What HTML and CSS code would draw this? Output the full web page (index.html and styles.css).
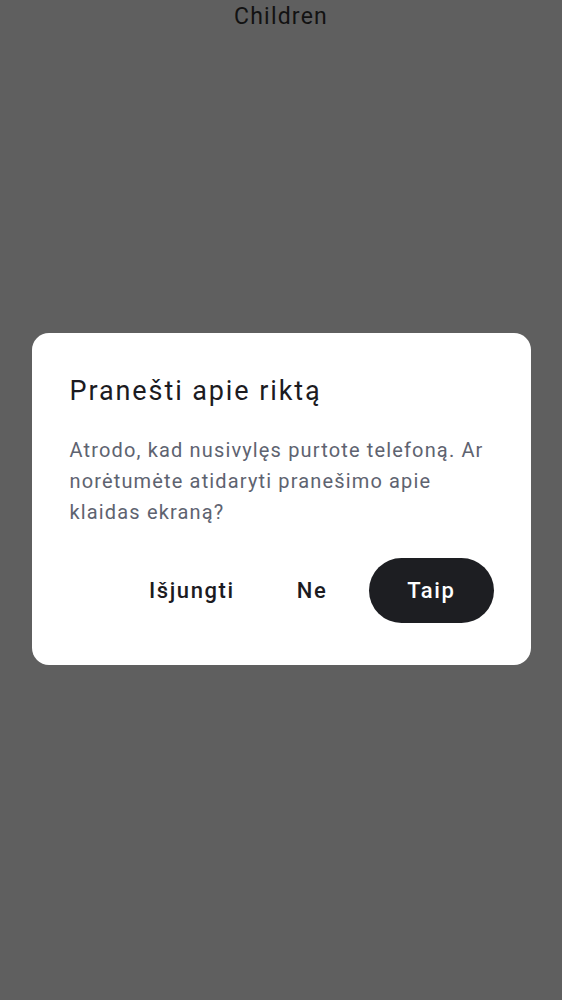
FILE: index.html
```html
<!DOCTYPE html>
<html lang="lt">
<head>
<meta charset="utf-8">
<link rel="stylesheet" href="styles.css">
</head>
<body>
<div class="screen">
  <div class="top-label">Children</div>
  <div class="dialog">
    <h2 class="dialog-title">Pranešti apie riktą</h2>
    <p class="dialog-text">Atrodo, kad nusivylęs purtote telefoną. Ar norėtumėte atidaryti pranešimo apie klaidas ekraną?</p>
    <div class="dialog-actions">
      <button class="btn btn-text">Išjungti</button>
      <button class="btn btn-text">Ne</button>
      <button class="btn btn-filled">Taip</button>
    </div>
  </div>
</div>
</body>
</html>
```

FILE: styles.css
```css
html, body {
  margin: 0;
  padding: 0;
}
body {
  font-family: Roboto, "Noto Sans", sans-serif;
  background: #5f5f5f;
}
.screen {
  width: 562px;
  height: 1000px;
  display: flex;
  flex-direction: column;
  align-items: center;
}
.top-label {
  font-size: 23px;
  line-height: 34px;
  letter-spacing: 1.2px;
  color: #121212;
  text-align: center;
}
.dialog {
  margin-top: 299px;
  width: 499px;
  box-sizing: border-box;
  background: #ffffff;
  border-radius: 17px;
  padding: 38px 37px 42px 38px;
}
.dialog-title {
  margin: 0;
  font-size: 27px;
  font-weight: 400;
  line-height: 40px;
  letter-spacing: 1.9px;
  color: #1c1b1f;
}
.dialog-text {
  margin: 24px 0 0;
  font-size: 20px;
  line-height: 31px;
  letter-spacing: 1.15px;
  color: #5e6370;
}
.dialog-actions {
  margin-top: 30px;
  display: flex;
  justify-content: flex-end;
  gap: 14px;
}
.btn {
  font-family: Roboto, "Noto Sans", sans-serif;
  font-size: 22px;
  font-weight: 500;
  height: 65px;
  border: none;
  border-radius: 33px;
  background: transparent;
  color: #1c1b1f;
  padding: 0 24px;
  letter-spacing: 1.6px;
  cursor: pointer;
}
.btn-filled {
  margin-left: 4px;
  background: #1d1e22;
  color: #ffffff;
  padding: 0 38px;
}
```
